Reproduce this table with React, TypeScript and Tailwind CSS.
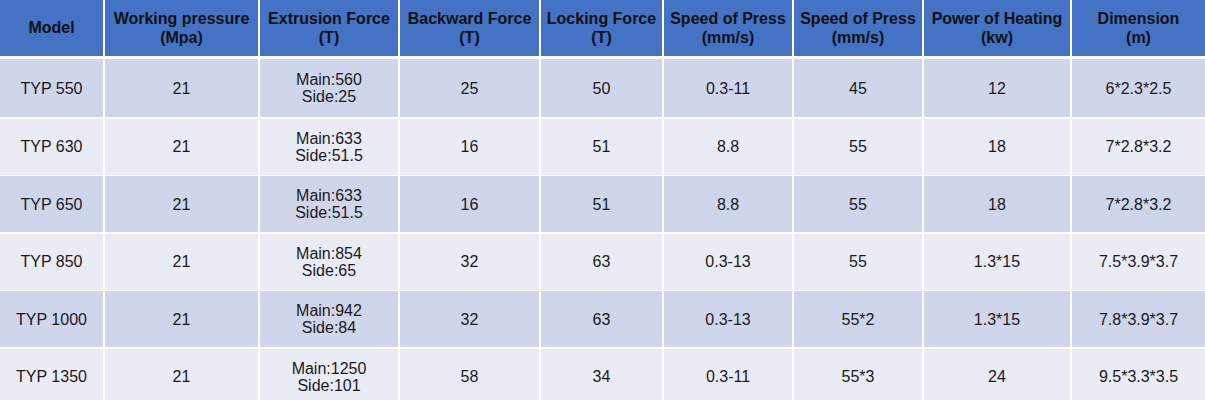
const COLS = "grid grid-cols-[103px_153px_138px_139px_121px_128px_128px_146px_1fr] gap-x-[2px]";

const headers = [
  ["Model"],
  ["Working pressure", "(Mpa)"],
  ["Extrusion Force", "(T)"],
  ["Backward Force", "(T)"],
  ["Locking Force", "(T)"],
  ["Speed of Press", "(mm/s)"],
  ["Speed of Press", "(mm/s)"],
  ["Power of Heating", "(kw)"],
  ["Dimension", "(m)"],
];

const rows: string[][][] = [
  [["TYP 550"], ["21"], ["Main:560", "Side:25"], ["25"], ["50"], ["0.3-11"], ["45"], ["12"], ["6*2.3*2.5"]],
  [["TYP 630"], ["21"], ["Main:633", "Side:51.5"], ["16"], ["51"], ["8.8"], ["55"], ["18"], ["7*2.8*3.2"]],
  [["TYP 650"], ["21"], ["Main:633", "Side:51.5"], ["16"], ["51"], ["8.8"], ["55"], ["18"], ["7*2.8*3.2"]],
  [["TYP 850"], ["21"], ["Main:854", "Side:65"], ["32"], ["63"], ["0.3-13"], ["55"], ["1.3*15"], ["7.5*3.9*3.7"]],
  [["TYP 1000"], ["21"], ["Main:942", "Side:84"], ["32"], ["63"], ["0.3-13"], ["55*2"], ["1.3*15"], ["7.8*3.9*3.7"]],
  [["TYP 1350"], ["21"], ["Main:1250", "Side:101"], ["58"], ["34"], ["0.3-11"], ["55*3"], ["24"], ["9.5*3.3*3.5"]],
];

export default function App() {
  return (
    <div className="w-[1205px] h-[400px] overflow-hidden bg-white font-['Liberation_Sans',Arial,sans-serif]">
      <div className={`${COLS} h-[56px]`}>
        {headers.map((h, i) => (
          <div
            key={i}
            className="flex flex-col items-center justify-center bg-[#4472c4] text-[16px] font-bold leading-[19px] text-[#111] pb-[1px]"
          >
            {h.map((line) => (
              <span key={line} className="whitespace-nowrap">{line}</span>
            ))}
          </div>
        ))}
      </div>
      <div className="mt-[3px] flex flex-col gap-y-[1.5px]">
        {rows.map((r, ri) => (
          <div key={ri} className={`${COLS} ${ri === 0 ? "h-[58px]" : "h-[56px]"}`}>
            {r.map((cell, ci) => (
              <div
                key={ci}
                className={`flex flex-col items-center justify-center text-[16px] leading-[17px] text-[#1a1a1a] ${
                  ri % 2 === 0 ? "bg-[#cfd5ea]" : "bg-[#e9ebf5]"
                }`}
              >
                {cell.map((line) => (
                  <span key={line} className="whitespace-nowrap">{line}</span>
                ))}
              </div>
            ))}
          </div>
        ))}
      </div>
    </div>
  );
}
